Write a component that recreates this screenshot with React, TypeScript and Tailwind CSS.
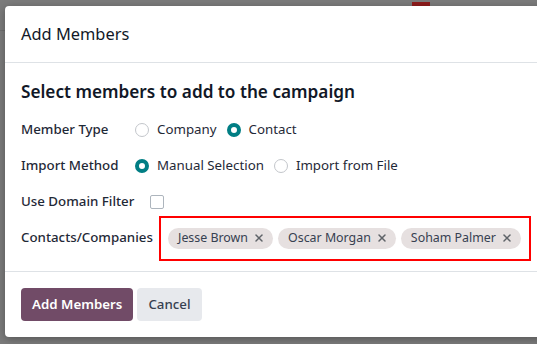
import { X } from "lucide-react";

function Radio({ label, checked }: { label: string; checked?: boolean }) {
  return (
    <label className="flex items-center gap-2 whitespace-nowrap">
      {checked ? (
        <span className="shrink-0 w-[14px] h-[14px] rounded-full border-[4px] border-[#017e84] bg-white" />
      ) : (
        <span className="shrink-0 w-[14px] h-[14px] rounded-full border border-[#c3c6cb] bg-white" />
      )}
      <span>{label}</span>
    </label>
  );
}

function Tag({ name }: { name: string }) {
  return (
    <span className="shrink-0 whitespace-nowrap flex items-center gap-[5px] h-[21px] pl-[10px] pr-[8px] rounded-full bg-[#e6e0e0] text-[#374151] text-[12.4px]">
      {name}
      <X className="w-[12px] h-[12px] text-[#5f6368]" strokeWidth={3} />
    </span>
  );
}

export default function App() {
  const tags = ["Jesse Brown", "Oscar Morgan", "Soham Palmer"];

  return (
    <div
      className="relative w-[537px] h-[344px] overflow-hidden bg-[#7b7b7b] pt-[6px] pl-[5px]"
      style={{ fontFamily: '"Noto Sans", "Open Sans", sans-serif' }}
    >
      {/* page behind the backdrop */}
      <div className="absolute left-[412px] top-[2px] w-[18px] h-[8px] bg-[#8e1c1c]" />
      <div className="absolute left-0 top-[30px] w-[5px] h-px bg-[#6e6e6e]" />

      <div className="relative w-[560px] h-[331px] bg-white rounded-[4px] shadow-[0_2px_8px_rgba(0,0,0,0.3)] text-[#1f2937]">
        <div className="h-[57px] flex items-center px-4 border-b border-[#dee2e6]">
          <h4 className="text-[16.4px] text-[#111827]">Add Members</h4>
        </div>

        <div className="pl-4 pt-[16px] h-[208px] text-[13.3px]">
          <h3 className="text-[17.2px] font-semibold text-[#111827] leading-[26px] whitespace-nowrap">
            Select members to add to the campaign
          </h3>

          <div className="mt-[7px] flex flex-col">
            <div className="flex items-center h-[36px]">
              <span className="shrink-0 w-[114px] font-medium">Member Type</span>
              <div className="flex items-center gap-[10px]">
                <Radio label="Company" />
                <Radio label="Contact" checked />
              </div>
            </div>
            <div className="flex items-center h-[36px]">
              <span className="shrink-0 w-[114px] font-medium">Import Method</span>
              <div className="flex items-center gap-[10px]">
                <Radio label="Manual Selection" checked />
                <Radio label="Import from File" />
              </div>
            </div>
            <div className="flex items-center h-[36px]">
              <span className="shrink-0 w-[129px] font-medium">Use Domain Filter</span>
              <span className="w-[14px] h-[14px] border border-[#adb5bd] rounded-[2px] bg-white" />
            </div>
            <div className="flex items-center h-[36px]">
              <span className="shrink-0 w-[138px] font-medium whitespace-nowrap">Contacts/Companies</span>
              <div className="shrink-0 w-[372px] h-[45px] border-2 border-[#ff0000] flex items-center gap-[5px] pl-[7px]">
                {tags.map(t => (
                  <Tag key={t} name={t} />
                ))}
              </div>
            </div>
          </div>
        </div>

        <div className="border-t border-[#dee2e6] h-[66px] flex items-start gap-1 px-4 pt-[16px]">
          <button className="h-[33px] px-[11px] rounded-[4px] bg-[#714b67] text-white text-[13.3px] font-semibold">
            Add Members
          </button>
          <button className="h-[33px] px-[11px] rounded-[4px] bg-[#e7e9ed] text-[#374151] text-[13.3px] font-medium">
            Cancel
          </button>
        </div>
      </div>
    </div>
  );
}
